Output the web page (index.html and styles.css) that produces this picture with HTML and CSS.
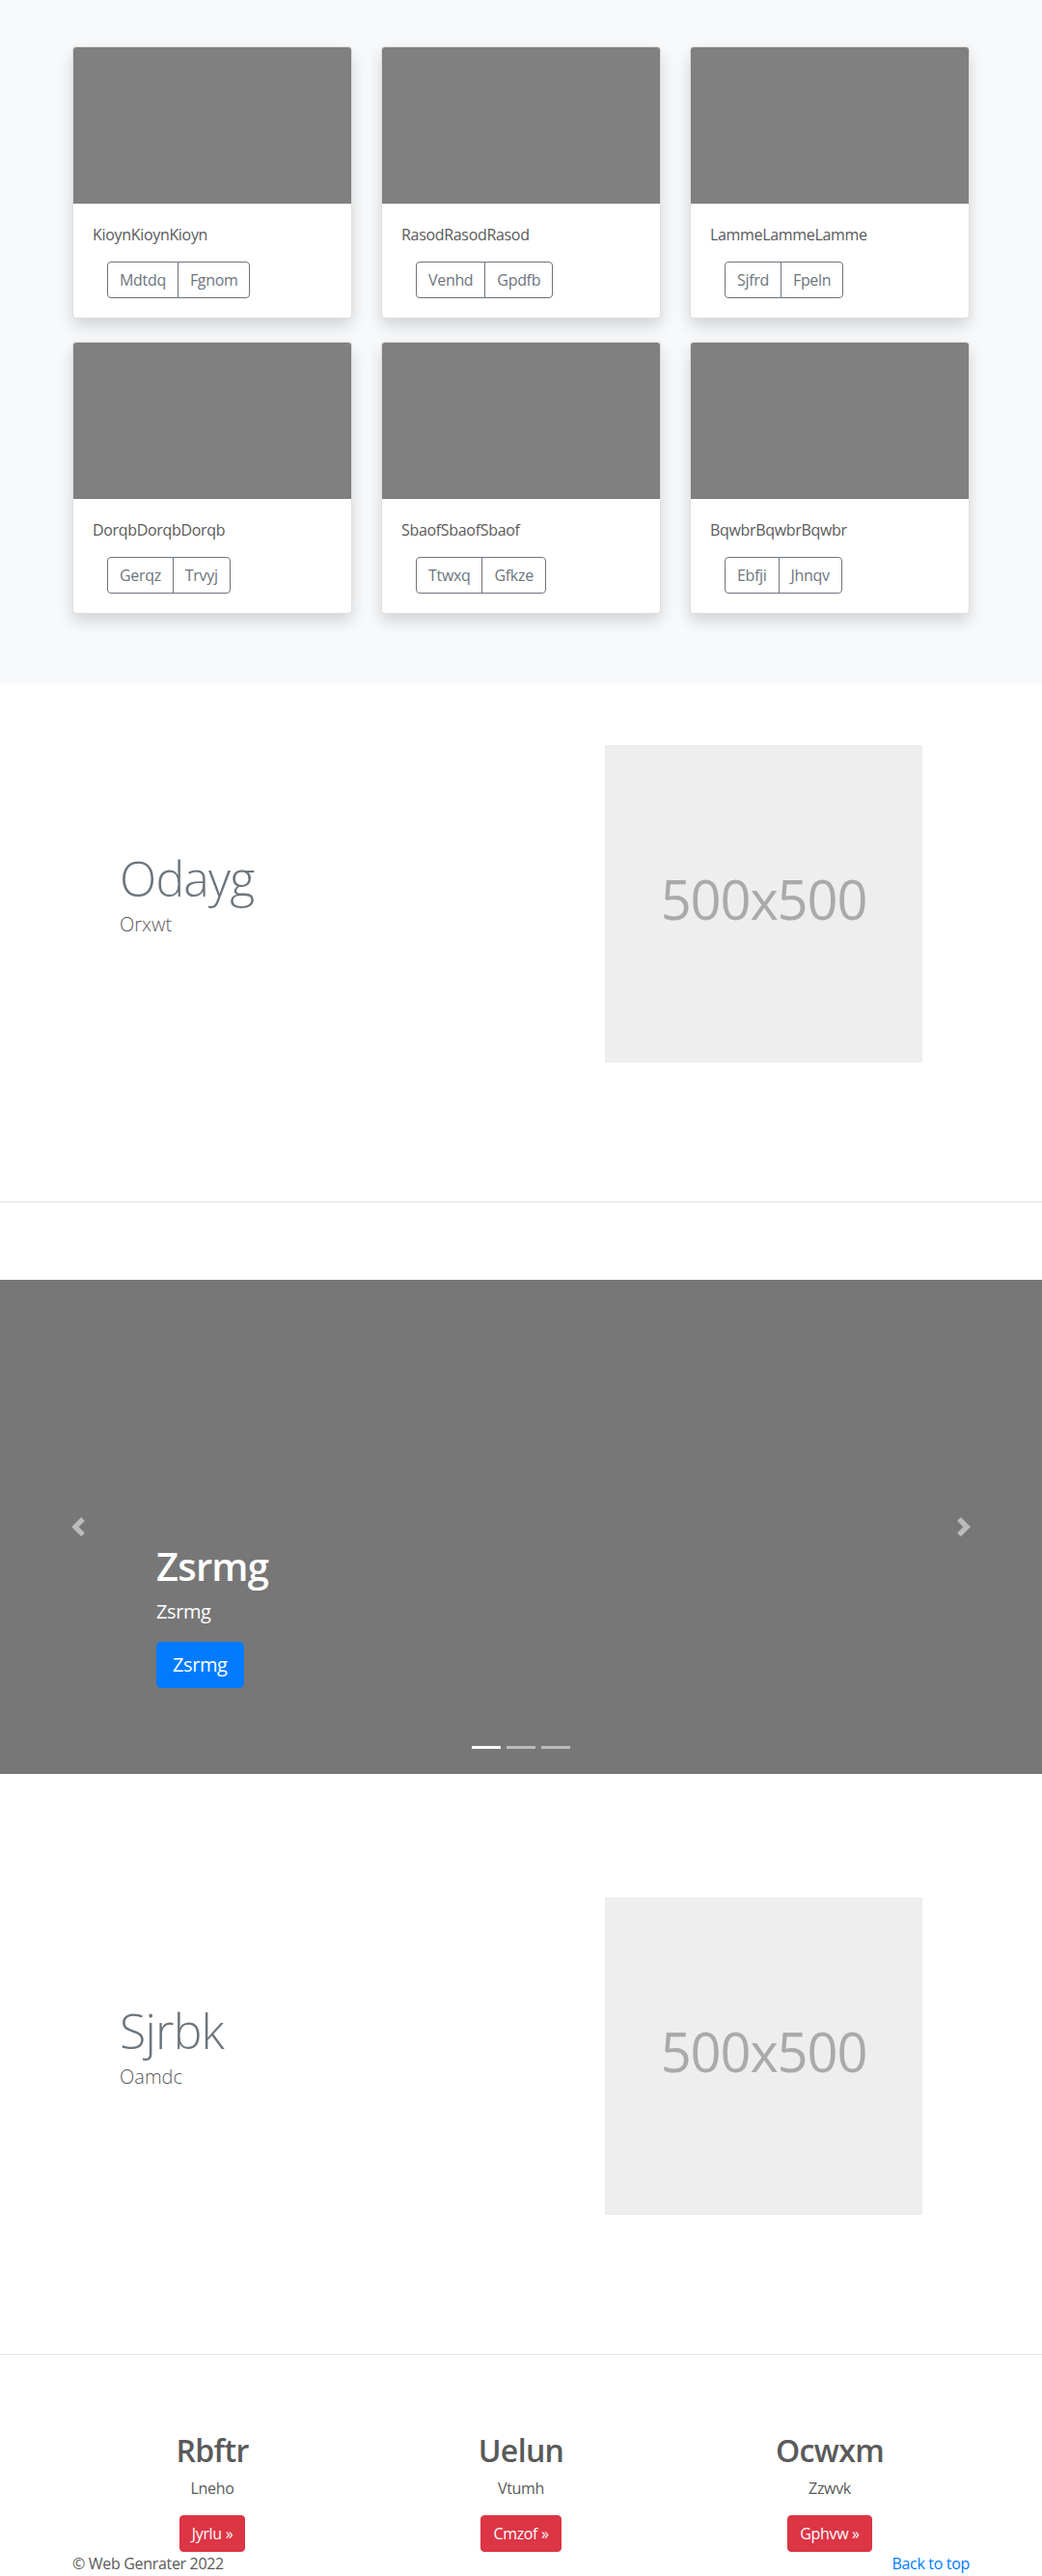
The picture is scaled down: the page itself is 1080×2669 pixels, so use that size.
FILE: index.html
```html
<!DOCTYPE html>
<html lang="en">
<head>
<meta charset="utf-8">
<title>Web Genrater</title>
<link rel="stylesheet" href="styles.css">
</head>
<body>
<main>
  <section class="album">
    <div class="container">
      <div class="card-grid">
        <div class="card">
          <div class="card-img"></div>
          <div class="card-body">
            <p class="card-text">KioynKioynKioyn</p>
            <div class="btn-group"><button class="btn-outline">Mdtdq</button><button class="btn-outline">Fgnom</button></div>
          </div>
        </div>
        <div class="card">
          <div class="card-img"></div>
          <div class="card-body">
            <p class="card-text">RasodRasodRasod</p>
            <div class="btn-group"><button class="btn-outline">Venhd</button><button class="btn-outline">Gpdfb</button></div>
          </div>
        </div>
        <div class="card">
          <div class="card-img"></div>
          <div class="card-body">
            <p class="card-text">LammeLammeLamme</p>
            <div class="btn-group"><button class="btn-outline">Sjfrd</button><button class="btn-outline">Fpeln</button></div>
          </div>
        </div>
        <div class="card">
          <div class="card-img"></div>
          <div class="card-body">
            <p class="card-text">DorqbDorqbDorqb</p>
            <div class="btn-group"><button class="btn-outline">Gerqz</button><button class="btn-outline">Trvyj</button></div>
          </div>
        </div>
        <div class="card">
          <div class="card-img"></div>
          <div class="card-body">
            <p class="card-text">SbaofSbaofSbaof</p>
            <div class="btn-group"><button class="btn-outline">Ttwxq</button><button class="btn-outline">Gfkze</button></div>
          </div>
        </div>
        <div class="card">
          <div class="card-img"></div>
          <div class="card-body">
            <p class="card-text">BqwbrBqwbrBqwbr</p>
            <div class="btn-group"><button class="btn-outline">Ebfji</button><button class="btn-outline">Jhnqv</button></div>
          </div>
        </div>
      </div>
    </div>
  </section>

  <section class="feature">
    <div class="feature-row">
      <div class="feature-text">
        <h2 class="feature-heading">Odayg</h2>
        <p class="lead">Orxwt</p>
      </div>
      <div class="feature-media">
        <svg class="placeholder" viewBox="0 0 329 329" width="329" height="329" aria-label="Placeholder: 500x500">
          <rect width="100%" height="100%" fill="#eee"></rect>
          <text x="50%" y="50%" dy=".3em" text-anchor="middle">500x500</text>
        </svg>
      </div>
    </div>
  </section>

  <hr class="divider">

  <div class="carousel">
    <ol class="carousel-indicators">
      <li class="active"></li>
      <li></li>
      <li></li>
    </ol>
    <div class="carousel-caption">
      <h1>Zsrmg</h1>
      <p>Zsrmg</p>
      <a class="btn-lg" href="#">Zsrmg</a>
    </div>
    <a class="carousel-control prev" href="#" aria-label="Previous">
      <svg width="20" height="20" viewBox="0 0 8 8"><path fill="#fff" d="M5.25 0l-4 4 4 4 1.5-1.5L4.25 4l2.5-2.5L5.25 0z"/></svg>
    </a>
    <a class="carousel-control next" href="#" aria-label="Next">
      <svg width="20" height="20" viewBox="0 0 8 8"><path fill="#fff" d="M2.75 0l-1.5 1.5L3.75 4l-2.5 2.5L2.75 8l4-4-4-4z"/></svg>
    </a>
  </div>

  <section class="feature">
    <div class="feature-row">
      <div class="feature-text">
        <h2 class="feature-heading">Sjrbk</h2>
        <p class="lead">Oamdc</p>
      </div>
      <div class="feature-media">
        <svg class="placeholder" viewBox="0 0 329 329" width="329" height="329" aria-label="Placeholder: 500x500">
          <rect width="100%" height="100%" fill="#eee"></rect>
          <text x="50%" y="50%" dy=".3em" text-anchor="middle">500x500</text>
        </svg>
      </div>
    </div>
  </section>

  <hr class="divider">

  <section class="marketing">
    <div class="col">
      <h2>Rbftr</h2>
      <p>Lneho</p>
      <a class="btn-danger" href="#">Jyrlu &raquo;</a>
    </div>
    <div class="col">
      <h2>Uelun</h2>
      <p>Vtumh</p>
      <a class="btn-danger" href="#">Cmzof &raquo;</a>
    </div>
    <div class="col">
      <h2>Ocwxm</h2>
      <p>Zzwvk</p>
      <a class="btn-danger" href="#">Gphvw &raquo;</a>
    </div>
  </section>
</main>

<footer class="footer">
  <p>&copy; Web Genrater 2022</p>
  <p><a href="#">Back to top</a></p>
</footer>
</body>
</html>
```

FILE: styles.css
```css
* {
  box-sizing: border-box;
}

html,
body {
  margin: 0;
  padding: 0;
}

body {
  font-family: "Open Sans", "Noto Sans", "DejaVu Sans", sans-serif;
  font-size: 16px;
  line-height: 1.5;
  color: #5a5a5a;
  background: #fff;
}

p {
  margin: 0 0 16px;
}

h1,
h2 {
  margin: 0 0 8px;
}

/* ---------- Album ---------- */
.album {
  background: #f8f9fa;
  padding: 48px 0 72px;
}

.container {
  width: 930px;
  margin: 0 auto;
}

.card-grid {
  display: grid;
  grid-template-columns: repeat(3, 1fr);
  column-gap: 30px;
  row-gap: 24px;
}

.card {
  background: #fff;
  border: 1px solid rgba(0, 0, 0, 0.125);
  border-radius: 4px;
  box-shadow: 0 8px 16px rgba(0, 0, 0, 0.15);
  overflow: hidden;
}

.card-img {
  height: 162px;
  background: #808080;
}

.card-body {
  padding: 20px;
}

.card-text {
  margin-bottom: 16px;
  letter-spacing: -0.02em;
}

.btn-group {
  display: inline-flex;
  margin-left: 15px;
}

.btn-outline {
  font: inherit;
  font-size: 16px;
  line-height: 24px;
  letter-spacing: -0.02em;
  color: #6c757d;
  background: transparent;
  border: 1px solid #6c757d;
  padding: 6px 12px;
  margin: 0;
  border-radius: 4px 0 0 4px;
}

.btn-outline + .btn-outline {
  margin-left: -1px;
  border-radius: 0 4px 4px 0;
}

/* ---------- Featurette ---------- */
.feature {
  padding: 64px 0;
}

.feature-row {
  width: 862px;
  margin: 0 auto;
  display: grid;
  grid-template-columns: 7fr 5fr;
  align-items: center;
}

.feature-text,
.feature-media {
  padding: 0 15px;
}

.feature-heading {
  font-size: 50px;
  font-weight: 300;
  line-height: 1;
  letter-spacing: -0.05rem;
  color: #6c757d;
  margin: 0 0 8px;
}

.lead {
  font-size: 20px;
  font-weight: 300;
  line-height: 30px;
  margin-bottom: 16px;
}

.placeholder {
  display: block;
  width: 329px;
  height: 329px;
}

.placeholder text {
  font-family: "Open Sans", "Noto Sans", sans-serif;
  font-size: 56px;
  fill: #aaa;
  letter-spacing: -0.02em;
}

.divider {
  border: 0;
  border-top: 1px solid rgba(0, 0, 0, 0.1);
  margin: 80px 0;
  height: 0;
}

/* ---------- Carousel ---------- */
.carousel {
  position: relative;
  height: 512px;
  background: #777;
  margin-bottom: 64px;
}

.carousel-caption {
  position: absolute;
  left: 15%;
  right: 15%;
  bottom: 48px;
  padding: 20px 0;
  color: #fff;
  display: flex;
  flex-direction: column;
  align-items: flex-start;
  z-index: 2;
}

.carousel-caption h1 {
  font-size: 40px;
  line-height: 48px;
  font-weight: 600;
  margin: 0 0 8px;
  letter-spacing: -0.02em;
}

.carousel-caption p {
  font-size: 20px;
  line-height: 30px;
  margin: 0 0 16px;
  letter-spacing: -0.02em;
}

.btn-lg {
  display: block;
  font-size: 20px;
  line-height: 30px;
  padding: 8px 16px;
  border: 1px solid #007bff;
  border-radius: 4.8px;
  background: #007bff;
  color: #fff;
  text-decoration: none;
  letter-spacing: -0.02em;
  margin-bottom: 21px;
}

.carousel-control {
  position: absolute;
  top: 0;
  bottom: 0;
  width: 15%;
  display: flex;
  align-items: center;
  justify-content: center;
  opacity: 0.5;
  z-index: 1;
}

.carousel-control.prev {
  left: 0;
}

.carousel-control.next {
  right: 0;
}

.carousel-indicators {
  position: absolute;
  left: 15%;
  right: 15%;
  bottom: 0;
  margin: 0 0 16px;
  padding: 0;
  list-style: none;
  display: flex;
  justify-content: center;
  z-index: 3;
}

.carousel-indicators li {
  width: 30px;
  height: 3px;
  margin: 10px 3px;
  background: #fff;
  opacity: 0.5;
}

.carousel-indicators li.active {
  opacity: 1;
}

/* ---------- Marketing ---------- */
.marketing {
  width: 960px;
  margin: 0 auto;
  display: grid;
  grid-template-columns: repeat(3, 1fr);
  text-align: center;
}

.marketing .col {
  padding: 0 15px;
  display: flex;
  flex-direction: column;
  align-items: center;
}

.marketing h2 {
  font-size: 32px;
  line-height: 1.2;
  font-weight: 600;
  margin: 0 0 8px;
  letter-spacing: -0.02em;
}

.marketing p {
  margin: 0 12px 16px;
  letter-spacing: -0.02em;
}

.btn-danger {
  display: block;
  font-size: 16px;
  line-height: 24px;
  padding: 6px 12px;
  border: 1px solid #dc3545;
  border-radius: 4px;
  background: #dc3545;
  color: #fff;
  text-decoration: none;
  letter-spacing: -0.02em;
}

/* ---------- Footer ---------- */
.footer {
  width: 930px;
  margin: 0 auto;
  display: flex;
  justify-content: space-between;
  padding-bottom: 48px;
  letter-spacing: -0.02em;
}

.footer p {
  margin: 0 0 16px;
}

.footer a {
  color: #007bff;
  text-decoration: none;
}
```
